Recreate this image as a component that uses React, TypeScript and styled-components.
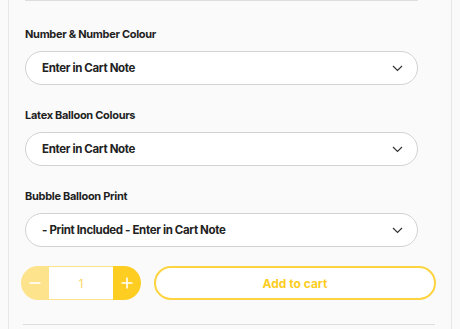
import React from "react";
import styled, { createGlobalStyle } from "styled-components";

const Global = createGlobalStyle`
  html, body { margin: 0; padding: 0; background: #fafafa; }
  body { font-family: Inter, "Noto Sans", sans-serif; color: #1f1f1f; }
  * { box-sizing: border-box; }
`;

const Page = styled.div`
  width: 460px;
  height: 329px;
  overflow: hidden;
  padding-left: 8px;
  background: #fafafa;
`;

const Panel = styled.div`
  width: 444px;
  height: 329px;
  border-left: 1px solid #e7e7e7;
  border-right: 1px solid #e7e7e7;
  padding: 0 0 0 12px;
  display: flex;
  flex-direction: column;
`;

const Rule = styled.div<{ $inset: number; $width: number; $top?: number }>`
  height: 1px;
  background: #dedede;
  margin-left: ${(p) => p.$inset}px;
  margin-top: ${(p) => p.$top ?? 0}px;
  width: ${(p) => p.$width}px;
`;

const Field = styled.div`
  display: flex;
  flex-direction: column;
  margin-left: 4px;
  width: 393px;
`;

const Label = styled.div`
  font-size: 11px;
  font-weight: 700;
  letter-spacing: -0.3px;
  line-height: 14px;
  height: 14px;
  margin-bottom: 10px;
`;

const Select = styled.div`
  height: 34px;
  border: 1.5px solid #d2d2d2;
  border-radius: 17px;
  background: #ffffff;
  display: flex;
  align-items: center;
  justify-content: space-between;
  padding: 0 14px 0 16px;
  font-size: 11.5px;
  font-weight: 700;
  letter-spacing: -0.35px;
  color: #222;
`;

const Chevron = () => (
  <svg width="11" height="7" viewBox="0 0 11 7">
    <path d="M1 1 L5.5 5.5 L10 1" fill="none" stroke="#333" strokeWidth="1.2" />
  </svg>
);

const Actions = styled.div`
  display: flex;
  gap: 13px;
  height: 34px;
  margin-top: -4px;
`;

const Qty = styled.div`
  display: flex;
  width: 120px;
  height: 34px;
  border-radius: 17px;
  overflow: hidden;
`;

const QtyBtn = styled.div<{ $light?: boolean }>`
  width: 28px;
  background: ${(p) => (p.$light ? "#fde38c" : "#fdcd22")};
  display: flex;
  align-items: center;
  justify-content: center;
`;

const QtyValue = styled.div`
  flex: 1;
  background: #fff;
  border-top: 1px solid #fde38c;
  border-bottom: 1px solid #fde38c;
  display: flex;
  align-items: center;
  justify-content: center;
  font-size: 12px;
  color: #f8d766;
`;

const Cart = styled.div`
  width: 282px;
  height: 34px;
  border: 2px solid #fdd43f;
  border-radius: 17px;
  background: #fff;
  display: flex;
  align-items: center;
  justify-content: center;
  color: #fdcd22;
  font-size: 12px;
  font-weight: 700;
`;

const PlusIcon = () => (
  <svg width="12" height="12" viewBox="0 0 12 12">
    <path d="M6 0.5 V11.5 M0.5 6 H11.5" stroke="#fff" strokeWidth="1.6" />
  </svg>
);
const MinusIcon = () => (
  <svg width="12" height="12" viewBox="0 0 12 12">
    <path d="M0.5 6 H11.5" stroke="#fff" strokeWidth="1.6" />
  </svg>
);

const fields = [
  { label: "Number & Number Colour", value: "Enter in Cart Note" },
  { label: "Latex Balloon Colours", value: "Enter in Cart Note" },
  { label: "Bubble Balloon Print", value: "- Print Included - Enter in Cart Note" },
];

const Stack = styled.div`
  display: flex;
  flex-direction: column;
  gap: 23px;
  padding-top: 26px;
`;

export default function App() {
  return (
    <Page>
      <Global />
      <Panel>
        <Rule $inset={4} $width={393} />
        <Stack>
          {fields.map((f) => (
            <Field key={f.label}>
              <Label>{f.label}</Label>
              <Select>
                <span>{f.value}</span>
                <Chevron />
              </Select>
            </Field>
          ))}
          <Actions>
            <Qty>
              <QtyBtn $light>
                <MinusIcon />
              </QtyBtn>
              <QtyValue>1</QtyValue>
              <QtyBtn>
                <PlusIcon />
              </QtyBtn>
            </Qty>
            <Cart>Add to cart</Cart>
          </Actions>
          <Rule $inset={2} $width={412} $top={1} />
        </Stack>
      </Panel>
    </Page>
  );
}
